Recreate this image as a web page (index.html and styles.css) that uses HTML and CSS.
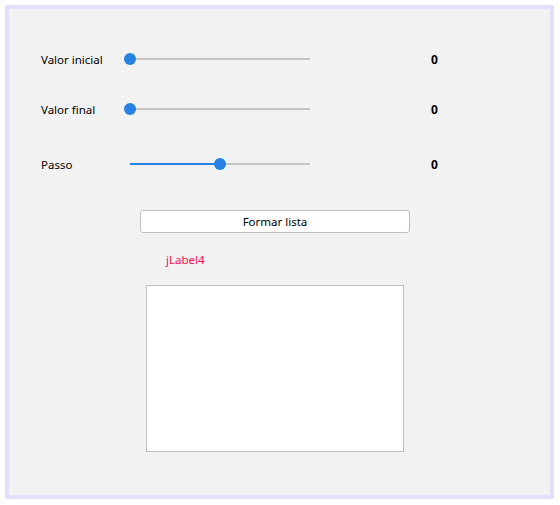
FILE: index.html
```html
<!DOCTYPE html>
<html lang="pt">
<head>
<meta charset="utf-8">
<title>Formar lista</title>
<link rel="stylesheet" href="styles.css">
</head>
<body>
<div class="frame">
  <div class="rows">
    <div class="row">
      <span class="label">Valor inicial</span>
      <div class="slider">
        <div class="rail">
          <div class="track"><div class="fill" style="width:0%"></div></div>
          <div class="thumb" style="left:0%"></div>
        </div>
      </div>
      <span class="value">0</span>
    </div>
    <div class="row">
      <span class="label">Valor final</span>
      <div class="slider">
        <div class="rail">
          <div class="track"><div class="fill" style="width:0%"></div></div>
          <div class="thumb" style="left:0%"></div>
        </div>
      </div>
      <span class="value">0</span>
    </div>
    <div class="row row-passo">
      <span class="label">Passo</span>
      <div class="slider">
        <div class="rail">
          <div class="track"><div class="fill" style="width:50%"></div></div>
          <div class="thumb" style="left:50%"></div>
        </div>
      </div>
      <span class="value">0</span>
    </div>
  </div>
  <button class="btn" type="button">Formar lista</button>
  <div class="jlabel">jLabel4</div>
  <div class="listbox"></div>
</div>
</body>
</html>
```
FILE: styles.css
```css
html, body {
  margin: 0;
  padding: 0;
  background: #ffffff;
}
body {
  font-family: "Noto Sans", "DejaVu Sans", sans-serif;
  font-size: 11.5px;
  color: #000;
}
.frame {
  box-sizing: border-box;
  margin: 5px 0 0 5px;
  width: 549px;
  height: 494px;
  border: 4px solid #e0e0fc;
  background: #f2f2f2;
  padding: 38px 0 0 32px;
  display: flex;
  flex-direction: column;
}
.rows {
  display: flex;
  flex-direction: column;
  gap: 26px;
}
.row {
  display: flex;
  align-items: center;
  height: 24px;
}
.row-passo {
  margin-top: 5px;
}
.label {
  width: 83px;
  flex: none;
}
.slider {
  width: 192px;
  height: 24px;
  flex: none;
  display: flex;
  padding: 0 6px;
  box-sizing: border-box;
}
.rail {
  position: relative;
  flex: 1;
  height: 24px;
}
.track {
  margin-top: 11px;
  height: 2px;
  background: #c4c4c4;
}
.fill {
  height: 100%;
  background: #2681e3;
}
.thumb {
  position: absolute;
  top: 6px;
  width: 12px;
  height: 12px;
  margin-left: -6px;
  border-radius: 50%;
  background: #2681e3;
}
.value {
  margin-left: 115px;
  font-weight: bold;
  font-size: 12px;
}
.btn {
  align-self: flex-start;
  margin: 34px 0 0 99px;
  width: 270px;
  height: 23px;
  box-sizing: border-box;
  border: 1px solid #c0c0c0;
  border-radius: 3px;
  background: #ffffff;
  font-family: inherit;
  font-size: 11.5px;
  color: #000;
  padding: 0;
}
.jlabel {
  margin: 18px 0 0 125px;
  color: #ff1050;
  line-height: 18px;
}
.listbox {
  margin: 16px 0 0 105px;
  width: 258px;
  height: 167px;
  box-sizing: border-box;
  border: 1px solid #bdbdbd;
  background: #ffffff;
}
```
